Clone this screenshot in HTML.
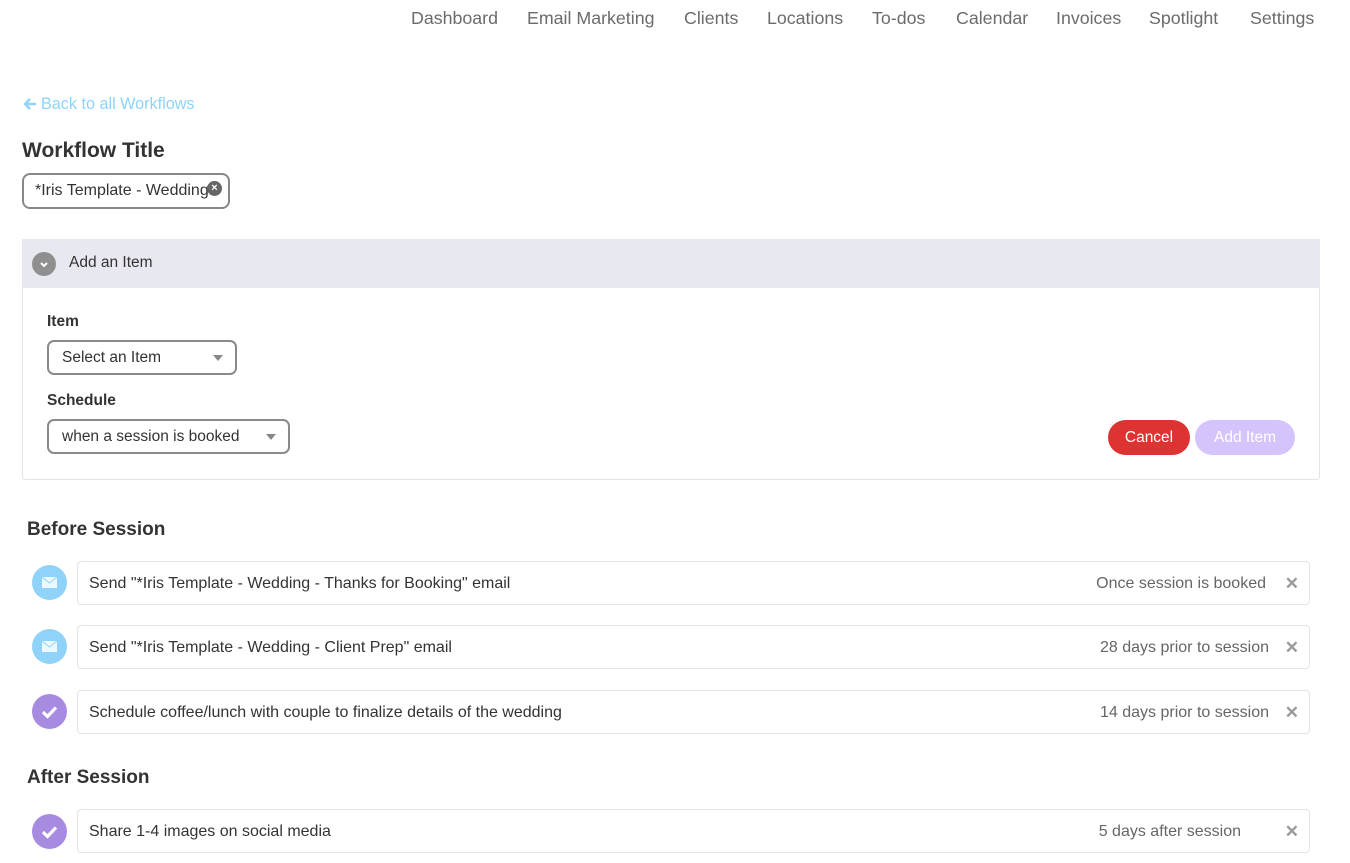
<!DOCTYPE html>
<html><head><meta charset="utf-8"><style>
*{box-sizing:border-box;margin:0;padding:0}
body{width:1350px;height:863px;overflow:hidden;background:#fff;font-family:"Liberation Sans",sans-serif;color:#333;position:relative}
.a{position:absolute;white-space:nowrap}
.nav{font-size:17.8px;color:#6b6b6b;top:8px}
.sel{position:absolute;border:2px solid #8a8a8a;border-radius:7px;font-size:15.5px;color:#333;padding-left:13px;line-height:32px;height:35px}
.sel:after{content:"";position:absolute;right:12px;top:13px;border-left:5px solid transparent;border-right:5px solid transparent;border-top:6px solid #888}
.row{position:absolute;left:77px;width:1233px;height:44px;border:1px solid #e3e3ea;border-radius:4px;font-size:16px;line-height:43px;padding-left:11px}
.row .r{position:absolute;right:40px;top:0;color:#666}
.row .x{position:absolute;right:10px;top:0;color:#999;font-weight:bold;font-size:17px}
.ic{position:absolute;left:32px;width:35px;height:35px;border-radius:50%}
.h{font-size:19px;font-weight:bold;color:#333}
</style></head><body>
<span class="a nav" style="left:411px">Dashboard</span>
<span class="a nav" style="left:527px">Email Marketing</span>
<span class="a nav" style="left:684px">Clients</span>
<span class="a nav" style="left:767px">Locations</span>
<span class="a nav" style="left:872px">To-dos</span>
<span class="a nav" style="left:956px">Calendar</span>
<span class="a nav" style="left:1056px">Invoices</span>
<span class="a nav" style="left:1149px">Spotlight</span>
<span class="a nav" style="left:1250px">Settings</span>

<svg class="a" style="left:22px;top:97px" width="15" height="14"><path d="M14 7H3M8 2L3 7l5 5" stroke="#8fd3fb" stroke-width="2.4" fill="none"/></svg>
<span class="a" style="left:41px;top:95px;font-size:16.2px;color:#8fd3fb">Back to all Workflows</span>
<span class="a h" style="left:22px;top:139px;font-size:21px">Workflow Title</span>
<div class="a" style="left:22px;top:173px;width:208px;height:36px;border:2px solid #888;border-radius:8px;font-size:16px;line-height:32px;padding-left:11px;overflow:hidden">*Iris Template - Wedding<span style="position:absolute;right:6px;top:6px;width:15px;height:15px;border-radius:50%;background:#666;color:#fff;font-size:11px;line-height:15px;text-align:center;font-weight:bold">×</span></div>

<div class="a" style="left:22px;top:239px;width:1298px;height:241px;border:1px solid #e3e3ea;border-radius:3px"></div>
<div class="a" style="left:22px;top:239px;width:1298px;height:49px;background:#e8e8f0"></div>
<div class="a" style="left:32px;top:252px;width:24px;height:24px;border-radius:50%;background:#8f8f8f"><svg width="24" height="24"><path d="M9 11l3 3 3-3" stroke="#fff" stroke-width="2" fill="none"/></svg></div>
<span class="a" style="left:69px;top:254px;font-size:15.5px">Add an Item</span>
<span class="a" style="left:47px;top:313px;font-size:15.5px;font-weight:bold">Item</span>
<div class="sel" style="left:47px;top:340px;width:190px">Select an Item</div>
<span class="a" style="left:47px;top:392px;font-size:15.5px;font-weight:bold">Schedule</span>
<div class="sel" style="left:47px;top:419px;width:243px">when a session is booked</div>
<div class="a" style="left:1108px;top:420px;width:82px;height:35px;border-radius:18px;background:#dd3333;color:#fff;font-size:15.5px;text-align:center;line-height:35px">Cancel</div>
<div class="a" style="left:1195px;top:420px;width:100px;height:35px;border-radius:18px;background:#d4c4fb;color:#fff;font-size:15.5px;text-align:center;line-height:35px">Add Item</div>

<span class="a h" style="left:27px;top:519px">Before Session</span>
<div class="ic" style="top:565px;background:#8fd3fb"><svg width="35" height="35"><rect x="10" y="12" width="15" height="11" fill="#fff" opacity=".85"/><path d="M10 12l7.5 6 7.5-6" stroke="#8fd3fb" fill="none"/></svg></div>
<div class="row" style="top:561px">Send "*Iris Template - Wedding - Thanks for Booking" email<span class="r" style="right:43px">Once session is booked</span><span class="x">✕</span></div>
<div class="ic" style="top:629px;background:#8fd3fb"><svg width="35" height="35"><rect x="10" y="12" width="15" height="11" fill="#fff" opacity=".85"/><path d="M10 12l7.5 6 7.5-6" stroke="#8fd3fb" fill="none"/></svg></div>
<div class="row" style="top:625px">Send "*Iris Template - Wedding - Client Prep" email<span class="r">28 days prior to session</span><span class="x">✕</span></div>
<div class="ic" style="top:694px;background:#a78be0"><svg width="35" height="35"><path d="M11 18l4.5 4.5 8.5-9" stroke="#fff" stroke-width="3.2" fill="none"/></svg></div>
<div class="row" style="top:690px">Schedule coffee/lunch with couple to finalize details of the wedding<span class="r">14 days prior to session</span><span class="x">✕</span></div>

<span class="a h" style="left:27px;top:767px">After Session</span>
<div class="ic" style="top:814px;background:#a78be0"><svg width="35" height="35"><path d="M11 18l4.5 4.5 8.5-9" stroke="#fff" stroke-width="3.2" fill="none"/></svg></div>
<div class="row" style="top:809px">Share 1-4 images on social media<span class="r" style="right:68px">5 days after session</span><span class="x">✕</span></div>
</body></html>
